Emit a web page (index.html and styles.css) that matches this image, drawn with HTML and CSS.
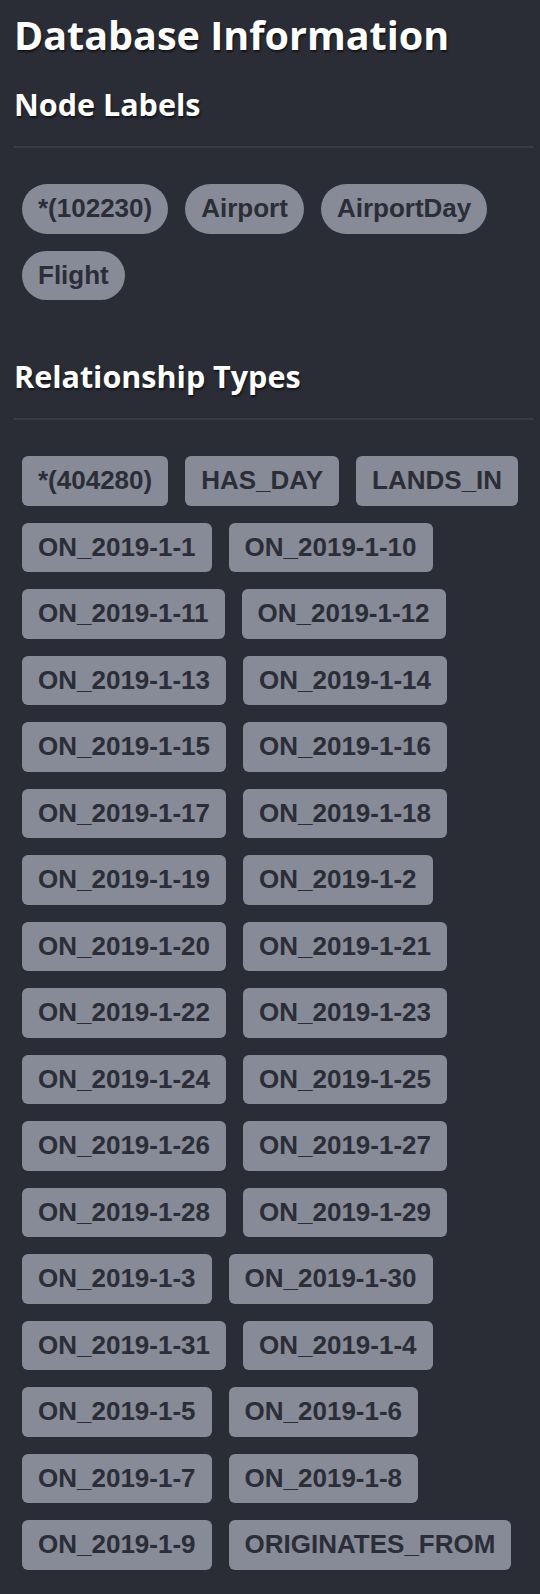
FILE: index.html
```html
<!DOCTYPE html>
<html lang="en">
<head>
<meta charset="utf-8">
<title>Database Information</title>
<link rel="stylesheet" href="styles.css">
</head>
<body>
<main class="panel">
  <h1 class="title">Database Information</h1>

  <section class="section">
    <h2 class="section-title">Node Labels</h2>
    <div class="chips">
      <span class="chip chip-pill">*(102230)</span>
      <span class="chip chip-pill">Airport</span>
      <span class="chip chip-pill">AirportDay</span>
      <span class="chip chip-pill">Flight</span>
    </div>
  </section>

  <section class="section section-rel">
    <h2 class="section-title">Relationship Types</h2>
    <div class="chips">
      <span class="chip">*(404280)</span>
      <span class="chip">HAS_DAY</span>
      <span class="chip">LANDS_IN</span>
      <span class="chip">ON_2019-1-1</span>
      <span class="chip">ON_2019-1-10</span>
      <span class="chip">ON_2019-1-11</span>
      <span class="chip">ON_2019-1-12</span>
      <span class="chip">ON_2019-1-13</span>
      <span class="chip">ON_2019-1-14</span>
      <span class="chip">ON_2019-1-15</span>
      <span class="chip">ON_2019-1-16</span>
      <span class="chip">ON_2019-1-17</span>
      <span class="chip">ON_2019-1-18</span>
      <span class="chip">ON_2019-1-19</span>
      <span class="chip">ON_2019-1-2</span>
      <span class="chip">ON_2019-1-20</span>
      <span class="chip">ON_2019-1-21</span>
      <span class="chip">ON_2019-1-22</span>
      <span class="chip">ON_2019-1-23</span>
      <span class="chip">ON_2019-1-24</span>
      <span class="chip">ON_2019-1-25</span>
      <span class="chip">ON_2019-1-26</span>
      <span class="chip">ON_2019-1-27</span>
      <span class="chip">ON_2019-1-28</span>
      <span class="chip">ON_2019-1-29</span>
      <span class="chip">ON_2019-1-3</span>
      <span class="chip">ON_2019-1-30</span>
      <span class="chip">ON_2019-1-31</span>
      <span class="chip">ON_2019-1-4</span>
      <span class="chip">ON_2019-1-5</span>
      <span class="chip">ON_2019-1-6</span>
      <span class="chip">ON_2019-1-7</span>
      <span class="chip">ON_2019-1-8</span>
      <span class="chip">ON_2019-1-9</span>
      <span class="chip">ORIGINATES_FROM</span>
    </div>
  </section>
</main>
</body>
</html>
```

FILE: styles.css
```css
html, body {
  margin: 0;
  padding: 0;
  background: #2a2d36;
}

.panel {
  padding: 8px 6px 20px 14px;
  font-family: "Open Sans", "Liberation Sans", sans-serif;
  color: #ffffff;
}

.title {
  margin: 0;
  font-size: 39.5px;
  font-weight: 700;
  line-height: 54px;
  text-shadow: 1px 2px 2px rgba(0, 0, 0, 0.55);
}

.section {
  margin-top: 23px;
}

.section-rel {
  margin-top: 57px;
}

.section-title {
  margin: 0;
  padding-bottom: 23px;
  border-bottom: 2px solid #393c46;
  font-size: 30.5px;
  font-weight: 700;
  line-height: 38px;
  text-shadow: 1px 2px 2px rgba(0, 0, 0, 0.55);
}

.chips {
  display: flex;
  flex-wrap: wrap;
  gap: 17px 17px;
  margin-top: 36px;
  padding-left: 8px;
}

.chip {
  display: block;
  padding: 11px 16px;
  background: #878a97;
  color: #2b2e37;
  font-family: "Liberation Sans", Arial, sans-serif;
  font-weight: 700;
  font-size: 26px;
  line-height: 27.5px;
  border-radius: 6px;
  white-space: nowrap;
}

.chip-pill {
  border-radius: 25px;
}
```
